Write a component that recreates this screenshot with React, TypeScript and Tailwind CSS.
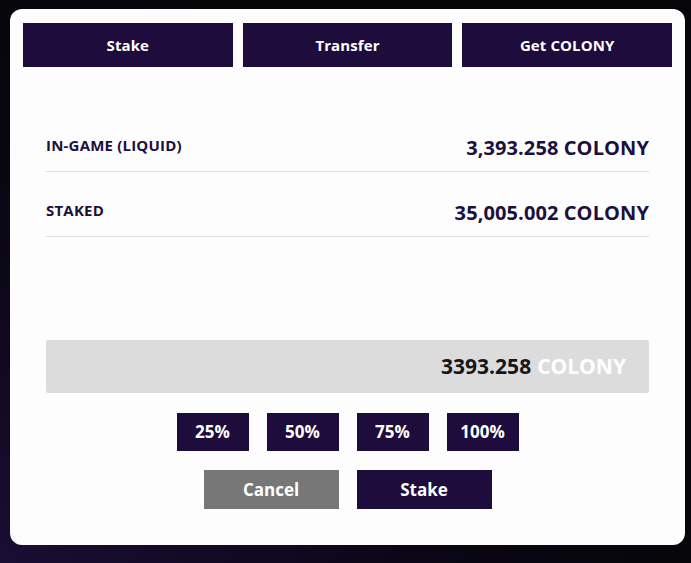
const tabs = ['Stake', 'Transfer', 'Get COLONY'];

const balances = [
  { label: 'IN-GAME (LIQUID)', value: '3,393.258 COLONY' },
  { label: 'STAKED', value: '35,005.002 COLONY' },
];

const percents = ['25%', '50%', '75%', '100%'];

export default function App() {
  return (
    <div
      className="w-[691px] h-[563px] bg-[#060609] bg-[radial-gradient(ellipse_at_0%_100%,#1a0d33_0%,#0a0614_45%,#060609_75%)] pt-[9px] pl-[10px] overflow-hidden"
      style={{ fontFamily: '"Open Sans", "Noto Sans", sans-serif' }}
    >
      <div className="w-[675px] h-[536px] bg-[#fdfdfd] rounded-[12px] px-[13px] pt-[14px] flex flex-col">
        {/* top tabs */}
        <div className="flex gap-[10px]">
          {tabs.map((t) => (
            <button
              key={t}
              className="flex-1 h-[44px] bg-[#1d0c3c] text-white text-[15px] font-bold tracking-[0.1px]"
            >
              {t}
            </button>
          ))}
        </div>

        {/* balances */}
        <div className="px-[23px] mt-[40px]">
          {balances.map((b) => (
            <div
              key={b.label}
              className="h-[65px] flex items-start justify-between pt-[28px] border-b border-[#dedede] text-[#1d0f3e] font-bold"
            >
              <span className="text-[15px] leading-[21px] tracking-[0.2px]">{b.label}</span>
              <span className="text-[20px] leading-[21px] mt-[2px] tracking-[0.1px]">{b.value}</span>
            </div>
          ))}
        </div>

        {/* amount box */}
        <div className="mx-[23px] mt-[103px] h-[53px] bg-[#dcdcdc] rounded-[2px] flex items-center justify-end pr-[23px] text-[21px] font-bold">
          <span className="text-[#161616]">3393.258</span>
          <span className="text-white ml-[6px]">COLONY</span>
        </div>

        {/* percent buttons */}
        <div className="flex justify-center gap-[18px] mt-[20px]">
          {percents.map((p) => (
            <button
              key={p}
              className="w-[72px] h-[38px] bg-[#1d0c3c] text-white text-[17px] font-bold"
            >
              {p}
            </button>
          ))}
        </div>

        {/* actions */}
        <div className="flex justify-center gap-[18px] mt-[19px]">
          <button className="w-[135px] h-[39px] bg-[#777777] text-white text-[17px] font-bold">
            Cancel
          </button>
          <button className="w-[135px] h-[39px] bg-[#1d0c3c] text-white text-[17px] font-bold">
            Stake
          </button>
        </div>
      </div>
    </div>
  );
}
